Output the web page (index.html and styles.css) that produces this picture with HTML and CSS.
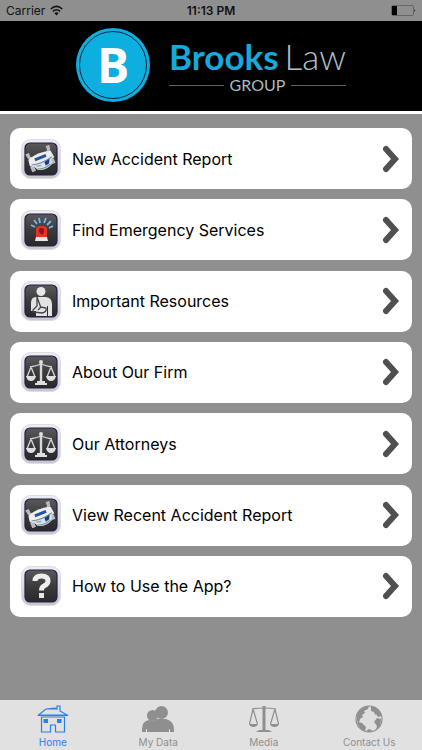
FILE: index.html
```html
<!DOCTYPE html>
<html lang="en">
<head>
<meta charset="utf-8">
<meta name="viewport" content="width=device-width, initial-scale=1">
<title>Brooks Law Group</title>
<link rel="stylesheet" href="styles.css">
</head>
<body>
<svg class="defs" aria-hidden="true">
  <defs>
    <linearGradient id="rim" x1="0" y1="0" x2="0" y2="1"><stop offset="0" stop-color="#eeeef2"/><stop offset="1" stop-color="#c6c6ce"/></linearGradient>
    <linearGradient id="face" x1="0" y1="0" x2="0" y2="1"><stop offset="0" stop-color="#5a5a5d"/><stop offset=".5" stop-color="#3b3b3d"/><stop offset="1" stop-color="#29292b"/></linearGradient>
    <symbol id="tile" viewBox="0 0 40 40">
      <rect x=".5" y=".5" width="39" height="39" rx="9" fill="url(#rim)" stroke="#dcdce1"/>
      <rect x="4" y="4" width="32" height="32" rx="5" fill="url(#face)" stroke="#20204a" stroke-width="1.2"/>
    </symbol>
    <symbol id="crash" viewBox="0 0 40 40">
      <use href="#tile"/>
      <g transform="rotate(-22 20 20)">
        <path d="M7 10h4v4l3 2-2 2-4-3zM29 10h4l-1 5-4 3-2-2 3-2zM7 23h4v6H7zM28 24h4v5h-4z" fill="#b9bcbd"/>
        <path d="M8 16q11-4 24 0l1 7-2 1H9l-2-2z" fill="#eceeed"/>
        <path d="M10 23h20l-2 6q-8 4-15 0z" fill="#dce4e9"/>
        <path d="M14 17h12v3H14z" fill="#2151a0"/>
        <path d="M9 22q11 3 22 0M13 28q7 3 14 0" fill="none" stroke="#79899a"/>
        <path d="m22 24 6-1-2 4-4 1z" fill="#133c83"/>
        <path d="m12 24 6 1v2l-4-1z" fill="#8cb0c9"/>
      </g>
    </symbol>
    <symbol id="siren" viewBox="0 0 40 40">
      <use href="#tile"/>
      <path d="m10 15 4 2M13 10l3 4M18 8l1 5M25 8l-2 5M30 11l-4 4M32 16l-4 2" stroke="#72b9ed" stroke-width="1.8"/>
      <path d="M15 27v-8q0-3 4-3h3q4 0 4 3v8z" fill="#e03424"/>
      <path d="M18 19q2-2 5 0v3l-2 3-3-3z" fill="#8d1515"/>
      <path d="M15 27h11l1 4H14z" fill="#efe5df"/>
    </symbol>
    <symbol id="patient" viewBox="0 0 40 40">
      <use href="#tile"/>
      <circle cx="20" cy="10.500" r="4.500" fill="#e6e6e6"/>
      <path d="M10 35V22q0-6 5-6h10q6 1 6 7v12h-4V25h-1v10H15v-5h-5z" fill="#e3e3e3"/>
      <path d="M16 16v9l-4 4v2l9 1q5-1 4-5l-5-1-3 3M16 16l4 11" fill="none" stroke="#444447" stroke-width="1.300"/>
    </symbol>
    <symbol id="balance" viewBox="0 0 40 40">
      <use href="#tile"/>
      <g fill="none" stroke="#d9d9d9" stroke-width="1.300"><path d="M9 15q6-1 11-3 5 2 11 3M10 15 6 25M10 15l4 10M30 15l-4 10M30 15l4 10"/><path d="M20 10v21" stroke-width="2.400"/></g>
      <path d="M5 24h10q-1 5-5 5t-5-5M25 24h10q-1 5-5 5t-5-5M16 29h8v2h2v2H14v-2h2z" fill="#dedede"/>
      <circle cx="20" cy="10" r="2" fill="#dedede"/>
    </symbol>
    <symbol id="question" viewBox="0 0 40 40">
      <use href="#tile"/>
      <path d="M14 15q0-5 6.500-5t6.500 5q0 3-4 5-2.500 1-2.500 4.500" fill="none" stroke="#eee" stroke-width="5"/>
      <path d="M18 27h5v5h-5z" fill="#e7e7e7"/>
    </symbol>
    <symbol id="chevron" viewBox="0 0 18 28"><path d="m4 4 9 10-9 10" fill="none" stroke="#505050" stroke-width="6" stroke-linecap="round" stroke-linejoin="miter"/></symbol>
  </defs>
</svg>
<div class="app">
  <div class="status">
    <div class="carrier"><span>Carrier</span>
      <svg width="13" height="11" viewBox="0 0 12 10" aria-hidden="true"><g fill="none" stroke="#111" stroke-width="1.500"><path d="M.7 3.600q5.300-4.800 10.600 0M2.700 5.800q3.300-3 6.600 0"/></g><path d="M4 7.300q2-1.600 4 0L6 9.500z" fill="#111"/></svg>
    </div>
    <strong>11:13 PM</strong>
    <svg class="battery" width="25" height="11" viewBox="0 0 25 11" aria-hidden="true"><rect x=".5" y=".5" width="22" height="10" rx="1.500" fill="none" stroke="#666"/><path d="M1 1h5v9H1z"/><path d="M23.500 4q1.500 1.500 0 3z"/></svg>
  </div>
  <header class="brand">
    <div class="seal"><span>B</span></div>
    <div class="wordmark">
      <h1><b>Brooks</b> <span>Law</span></h1>
      <div class="group">GROUP</div>
    </div>
  </header>
  <main class="list">
    <a class="card" href="#new"><svg class="icon" aria-hidden="true"><use href="#crash"/></svg><span>New Accident Report</span><svg class="chevron" aria-hidden="true"><use href="#chevron"/></svg></a>
    <a class="card" href="#emergency"><svg class="icon" aria-hidden="true"><use href="#siren"/></svg><span>Find Emergency Services</span><svg class="chevron" aria-hidden="true"><use href="#chevron"/></svg></a>
    <a class="card" href="#resources"><svg class="icon" aria-hidden="true"><use href="#patient"/></svg><span>Important Resources</span><svg class="chevron" aria-hidden="true"><use href="#chevron"/></svg></a>
    <a class="card" href="#firm"><svg class="icon" aria-hidden="true"><use href="#balance"/></svg><span>About Our Firm</span><svg class="chevron" aria-hidden="true"><use href="#chevron"/></svg></a>
    <a class="card" href="#attorneys"><svg class="icon" aria-hidden="true"><use href="#balance"/></svg><span>Our Attorneys</span><svg class="chevron" aria-hidden="true"><use href="#chevron"/></svg></a>
    <a class="card" href="#recent"><svg class="icon" aria-hidden="true"><use href="#crash"/></svg><span>View Recent Accident Report</span><svg class="chevron" aria-hidden="true"><use href="#chevron"/></svg></a>
    <a class="card" href="#help"><svg class="icon" aria-hidden="true"><use href="#question"/></svg><span>How to Use the App?</span><svg class="chevron" aria-hidden="true"><use href="#chevron"/></svg></a>
  </main>
  <nav class="tabs">
    <a class="tab active" href="#home"><svg width="32" height="28" viewBox="0 0 32 28" aria-hidden="true"><g fill="none" stroke="currentColor" stroke-width="1.200"><path d="M1.500 10 9 4l9-1 2 1V1h3v5l7 4zM4.500 12v15h9v-7h5v7h9V12zM1 10.500h30M9 4l11 0"/></g><path d="M6.500 14h4.500v4H6.500zM20 14h4.500v4H20z" fill="currentColor"/></svg><span>Home</span></a>
    <a class="tab" href="#data"><svg width="32" height="28" viewBox="0 0 32 28" fill="currentColor" aria-hidden="true"><circle cx="19.500" cy="7.500" r="6.500"/><circle cx="10.500" cy="10.500" r="5.500"/><path d="M0 27v-3q0-8 7-9l5 1 3-2h9q8 2 8 11v2h-4v-3h-1v3H5v-3H4v3z"/></svg><span>My Data</span></a>
    <a class="tab" href="#media"><svg width="32" height="28" viewBox="0 0 32 28" aria-hidden="true"><g fill="none" stroke="currentColor" stroke-width="1.200"><path d="M4 4q6-1 12-1t12 1M5 4 1.500 19M5 4l4.500 15M27 4l-4.500 15M27 4l3.500 15"/><path d="M16 1v25" stroke-width="3"/></g><path d="M1 19h9q-1 3-4.500 3T1 19M22 19h9q-1 3-4.500 3T22 19M11 25h10l3 2H8z" fill="currentColor"/></svg><span>Media</span></a>
    <a class="tab" href="#contact"><svg width="28" height="28" viewBox="0 0 28 28" aria-hidden="true"><circle cx="14" cy="14" r="13" fill="#dedede" stroke="currentColor" stroke-width="1.200"/><path d="M2 10q2-8 12-9l-1 3-4 2 1 2-3 2 1 2-3 2-1 4-2-2zM16 1q7 1 10 7v3l-3 1-2-3-1 1-1-3-3-1zM3 17l4 1 4 4-1 4q-6-2-8-9M22 13l4 1q0 8-5 11l1-4-3-4zM14 24l4 2-4 1-3-1z" fill="currentColor"/></svg><span>Contact Us</span></a>
  </nav>
</div>
</body>
</html>
```
FILE: styles.css
```css
* { box-sizing: border-box; }
body { margin: 0; font-family: Inter, "Liberation Sans", sans-serif; color: #000; background: #8f8f8f; }
a { color: inherit; text-decoration: none; }
.defs { position: absolute; width: 0; height: 0; }
.app { min-height: 100vh; display: flex; flex-direction: column; }
.status { height: 21px; padding: 0 6px; display: grid; grid-template-columns: 1fr auto 1fr; align-items: center; font-size: 12px; line-height: 20px; color: #111; }
.status strong { font-weight: 600; }
.carrier { display: flex; align-items: center; gap: 5px; }
.battery { justify-self: end; }
.brand { height: 93px; background: #000; border-bottom: 3px solid #fff; display: flex; justify-content: center; align-items: center; gap: 19px; padding-bottom: 2px; }
.seal { width: 74px; height: 74px; padding: 3px; border-radius: 50%; background: #0cafe0; }
.seal span { display: flex; align-items: center; justify-content: center; height: 68px; border: 1px solid #062430; border-radius: 50%; color: #fff; font: 700 48px/66px "Open Sans", sans-serif; }
.wordmark { display: flex; flex-direction: column; font-family: Lato, sans-serif; }
h1 { margin: 0; display: flex; gap: 6px; font-size: 35px; line-height: 40px; font-weight: 300; color: #b5c0c5; white-space: nowrap; }
h1 b { color: #16a9dc; font-weight: 700; }
.group { display: flex; align-items: center; gap: 6px; color: #aebabf; font-size: 16px; line-height: 18px; }
.group::before, .group::after { content: ""; flex: 1; height: 1px; background: #5b6468; }
.list { flex: 1; padding: 14px 10px 83px; display: flex; flex-direction: column; justify-content: space-between; gap: 10px; }
.card { height: 61px; padding: 0 12px 0 11px; border-radius: 10px; background: #fff; display: flex; align-items: center; gap: 11px; font-size: 16px; line-height: 24px; }
.card span { flex: 1; }
.icon { width: 40px; height: 40px; }
.chevron { width: 18px; height: 28px; }
.tabs { height: 50px; display: grid; grid-template-columns: repeat(4, 1fr); background: #e1e1e1; color: #8f8f8f; }
.tab { display: flex; flex-direction: column; align-items: center; padding-top: 5px; gap: 2px; font-size: 10px; line-height: 14px; }
.active { color: #2680ed; }
```
